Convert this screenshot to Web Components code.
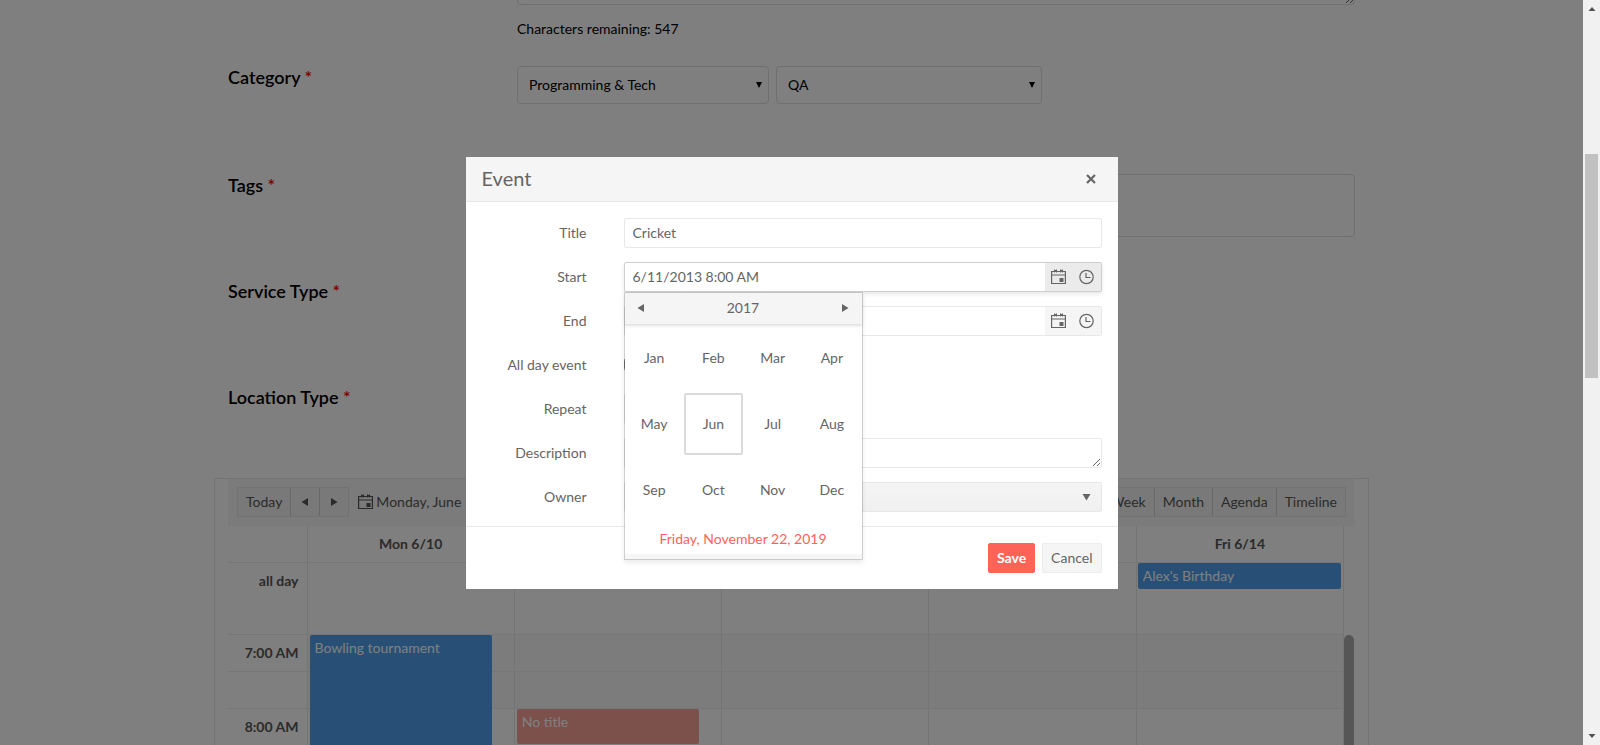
<!DOCTYPE html>
<html lang="en">
<head>
<meta charset="utf-8">
<title>Event</title>
<style>
html,body{height:100%}
body{margin:0;background:#fff;font:14px/20px Lato,"Open Sans",sans-serif;color:#000}
</style>
</head>
<body>
<app-shell>
  <form-row label="Description" class="first" nolabel>
    <text-counter remaining="547"></text-counter>
  </form-row>
  <form-row label="Category" style="--h:108px">
    <drop-list name="Category" value="Programming &amp; Tech" style="--w:252px"></drop-list>
    <drop-list name="Subcategory" value="QA" style="--w:266px"></drop-list>
  </form-row>
  <form-row label="Tags" style="--h:106px"><tag-box></tag-box></form-row>
  <form-row label="Service Type" style="--h:106px"></form-row>
  <form-row label="Location Type" style="--h:92px"></form-row>
  <week-scheduler></week-scheduler>
  <event-dialog slot="overlay"></event-dialog>
</app-shell>
<script>
const define = (name, html, setup) => customElements.define(name, class extends HTMLElement {
  static formAssociated = name === 'date-field';
  constructor() {
    super();
    const t = document.createElement('template');
    t.innerHTML = '<style>*{box-sizing:border-box}:host{box-sizing:border-box}button,input,select,textarea{font:inherit;color:inherit;margin:0}</style>' + html;
    this.attachShadow({mode: 'open', delegatesFocus: name === 'date-field'}).append(t.content.cloneNode(true));
  }
  connectedCallback() { if (setup) setup(this, this.shadowRoot); }
});

const shapes = {
  calendar: '<path d="M.6 2.500h13.800v12H.6zM.6 6h13.800" fill="none" stroke="currentColor" stroke-width="1.200"/><path d="M3.500 .5v3M5.500 .5v3M9.500 .5v3M11.500 .5v3" stroke="currentColor" stroke-width="1"/><path d="M3.500 1h2v2h-2zM9.500 1h2v2h-2zM8.500 9H12.500v4h-4z" fill="currentColor"/>',
  clock: '<circle cx="7.500" cy="8" r="6.700" fill="none" stroke="currentColor" stroke-width="1.200"/><path d="M7 4v4.500H11.500" fill="none" stroke="currentColor" stroke-width="1.200"/>',
  left: '<path d="M11 4v8L4.500 8z" fill="currentColor"/>',
  right: '<path d="M5 4v8L11.500 8z" fill="currentColor"/>',
  down: '<path d="M3.500 5h8l-4 6.500z" fill="currentColor"/>',
  select: '<path d="M5 5h6l-3 6z" fill="currentColor"/>',
  close: '<path d="M3 4l8 8M11 4l-8 8" stroke="currentColor" stroke-width="2.200"/>',
  up2: '<path d="M4.500 11L8 7l3.500 4z" fill="currentColor"/>',
  down2: '<path d="M4.500 5L8 9l3.500-4z" fill="currentColor"/>'
};
define('ui-icon', '<style>:host{display:inline-flex;width:16px;height:16px;flex:none}</style><svg width="16" height="16" viewBox="0 0 16 16" aria-hidden="true"></svg>',
  (el, r) => { r.querySelector('svg').innerHTML = shapes[el.getAttribute('shape')]; });

define('app-shell', `<style>
:host{display:flex;height:100vh;overflow:hidden}
.view{flex:1;min-width:0;position:relative;overflow:hidden}
main{max-width:1155px;margin:0 auto}
</style>
<div class="view"><main><slot></slot></main><slot name="overlay"></slot></div><scroll-rail></scroll-rail>`);

define('scroll-rail', `<style>
:host{display:flex;flex-direction:column;align-items:center;width:17px;background:#f1f1f1;color:#505050}
div{width:13px}.a{flex:138}.t{flex:223;background:#c1c1c1}.b{flex:351}
</style><ui-icon shape="up2"></ui-icon><div class="a"></div><div class="t"></div><div class="b"></div><ui-icon shape="down2"></ui-icon>`);

define('form-row', `<style>
:host{display:grid;grid-template-columns:289px 1fr;padding:0 14px;min-height:var(--h,auto)}
:host(.first){height:66px}
h3{margin:0;font-size:18px;line-height:22px;font-weight:600}
b{font-weight:600;color:#f00}
.f{display:flex;gap:7px;align-items:flex-start;min-width:0}
</style><h3></h3><div class="f"><slot></slot></div>`, (el, r) => {
  if (el.hasAttribute('nolabel')) return;
  r.querySelector('h3').innerHTML = el.getAttribute('label') + ' <b>*</b>';
});

define('text-counter', `<style>
:host{display:block;flex:1}
textarea{display:block;width:100%;height:80px;margin-top:-75px;border:1px solid #dedede;border-radius:4px;resize:vertical;background:none}
p{margin:14px 0 0;line-height:20px;font-size:14px}
</style><textarea aria-label="Description"></textarea><p></p>`, (el, r) => {
  r.querySelector('p').textContent = 'Characters remaining: ' + el.getAttribute('remaining');
});

define('drop-list', `<style>
:host{display:block;position:relative;width:var(--w)}
select{width:100%;height:38px;appearance:none;background:none;border:1px solid #dedede;border-radius:4px;padding:0 11px}
ui-icon{position:absolute;right:2px;top:11px;pointer-events:none}
</style><select><option></option></select><ui-icon shape="select"></ui-icon>`, (el, r) => {
  r.querySelector('select').setAttribute('aria-label', el.getAttribute('name'));
  r.querySelector('option').textContent = el.getAttribute('value');
});

define('tag-box', `<style>:host{display:block;flex:1}
input{display:block;width:100%;height:63px;border:1px solid #dedede;border-radius:4px;background:none}
</style><input type="text" aria-label="Tags">`);

define('week-scheduler', `<style>
:host{display:block;border:1px solid #e6e6e6;border-bottom:0;padding:0 14px 0 13px;color:#565656}
nav{display:flex;align-items:center;height:47px;padding:0 8px 2px 9px;background:#f6f6f6}
.g{display:flex;border:1px solid #e4e4e4}
.g button{height:28px;padding:0 8px;border:0;background:#f3f3f3;white-space:nowrap}
.g button+button{border-left:1px solid #d0d0d0}
.g button.i{padding:0 6px;display:flex;align-items:center}
.d{display:flex;align-items:center;gap:2px;margin-left:9px;white-space:nowrap;color:#565656;text-decoration:none}
.r{margin-left:auto}
.w{display:flex;align-items:stretch}
table{flex:1;table-layout:fixed;border-collapse:collapse;width:1px}
.k{width:10px;padding-top:109px}
.k i{display:block;height:100%;background:#adadad;border-radius:5px 5px 0 0}
th,td{padding:0;border-bottom:1px solid #ececec}
th+th,td{border-left:1px solid #e8e8e8}
td:last-child,thead th:last-child{border-right:1px solid #e8e8e8}
thead tr{height:36px}tr{height:37px}tr.a{height:72px}
col:first-child{width:79px}
tbody th{text-align:right;padding-right:8px}
.a th{vertical-align:top;padding-top:8px}
.n td{background:#f9f9f9}
td{position:relative;vertical-align:top}
.e{position:absolute;z-index:1;left:2px;top:0;border-radius:2px;background:#50a0ee;color:#fff;padding:3px 5px}
</style>
<nav><div class="g"><button>Today</button><button class="i" aria-label="Previous"><ui-icon shape="left"></ui-icon></button><button class="i" aria-label="Next"><ui-icon shape="right"></ui-icon></button></div>
<a class="d" href="#"><ui-icon shape="calendar"></ui-icon><span>Monday, June 10, 2013</span></a>
<div class="g r"><button>Week</button><button>Month</button><button>Agenda</button><button>Timeline</button></div></nav>
<div class="w"><table>
<colgroup><col><col><col><col><col><col></colgroup>
<thead><tr><th></th><th>Mon 6/10</th><th></th><th></th><th></th><th>Fri 6/14</th></tr></thead>
<tbody>
<tr class="a"><th>all day</th><td></td><td></td><td></td><td></td><td><div class="e" style="left:1px;right:2px;height:26px">Alex's Birthday</div></td></tr>
<tr class="n"><th>7:00 AM</th><td><div class="e" style="right:22px;height:220px">Bowling tournament</div></td><td></td><td></td><td></td><td></td></tr>
<tr class="n"><th></th><td></td><td></td><td></td><td></td><td></td></tr>
<tr><th>8:00 AM</th><td></td><td><div class="e" style="right:22px;height:35px;background:#f8a398">No title</div></td><td></td><td></td><td></td></tr>
<tr><th></th><td></td><td></td><td></td><td></td><td></td></tr>
</tbody></table><div class="k"><i></i></div></div>`);

define('date-field', `<style>
:host{display:flex;height:30px;border:1px solid #e8e8e8;border-radius:2px;background:#fff}
:host([active]){border-color:#cfcfcf;box-shadow:0 2px 4px rgba(0,0,0,.1)}
input{flex:1;min-width:0;border:0;padding:0 8px;outline:0;background:none}
span{display:flex;background:#f5f5f5}
:host([active]) span{background:#ebebeb}
button{width:28px;border:0;background:none;padding:0;display:flex;align-items:center;justify-content:center}
</style><input type="text"><span><button aria-label="Open the calendar"><ui-icon shape="calendar"></ui-icon></button><button aria-label="Open the time list"><ui-icon shape="clock"></ui-icon></button></span>`, (el, r) => {
  const i = r.querySelector('input');
  i.value = el.getAttribute('value') || '';
  i.setAttribute('aria-label', el.getAttribute('name'));
});

define('month-picker', `<style>
:host{display:block;width:239px;border:1px solid rgba(0,0,0,.15);background:#fff;background-clip:padding-box;box-shadow:0 3px 5px rgba(0,0,0,.08)}
header{display:flex;align-items:center;justify-content:space-between;height:32px;background:#f5f5f5;border-bottom:1px solid #e4e4e4;box-shadow:0 1px 3px rgba(0,0,0,.12)}
header button{border:0;background:none;padding:0;width:32px;height:32px;display:flex;align-items:center;justify-content:center}
.m{display:grid;grid-template-columns:repeat(4,1fr);grid-auto-rows:66px;align-items:center}
.m button{height:62px;padding:0;border:2px solid transparent;border-radius:2px;background:none}
.m .s{border-color:#dadada}
.t{display:block;height:31px;line-height:31px;text-align:center;color:#ff6358;text-decoration:none}
footer{height:5px;background:#f6f6f6}
</style><header><button aria-label="Previous year"><ui-icon shape="left"></ui-icon></button><span>2017</span><button aria-label="Next year"><ui-icon shape="right"></ui-icon></button></header>
<div class="m"></div><a class="t" href="#">Friday, November 22, 2019</a><footer></footer>`, (el, r) => {
  r.querySelector('.m').innerHTML = 'Jan Feb Mar Apr May Jun Jul Aug Sep Oct Nov Dec'.split(' ')
    .map(m => `<button${m === 'Jun' ? ' class="s"' : ''}>${m}</button>`).join('');
});

define('event-dialog', `<style>
:host{display:flex;align-items:center;justify-content:center;position:absolute;inset:0;z-index:5;background:rgba(0,0,0,.5);color:#656565}
section{width:652px;background:#fff}
header{display:flex;align-items:center;justify-content:space-between;height:45px;padding:0 16px;background:#f5f5f5;border-bottom:1px solid #e8e8e8}
h2{margin:0;font-size:20px;line-height:24px;padding-bottom:2px;font-weight:400}
header button{border:0;background:none;padding:0;width:20px;height:20px;display:flex;align-items:center;justify-content:center}
form{display:grid;grid-template-columns:105px 1fr;column-gap:37px;row-gap:14px;padding:16px 16px 14px;align-items:center;grid-auto-rows:30px}
label{text-align:right}
.x{display:block;width:100%;height:30px;border:1px solid #e8e8e8;border-radius:2px;padding:0 8px;background:#fff}
textarea.x{resize:vertical}
.p{position:relative}
.p month-picker{position:absolute;left:0;top:30px;z-index:2}
.c{display:block;width:13px;height:13px}
.q{width:180px}
select.x{appearance:none;background:linear-gradient(#f5f5f5,#f0f0f0)}
.p>ui-icon{position:absolute;right:7px;top:7px;pointer-events:none}
footer{display:flex;justify-content:flex-end;gap:7px;padding:16px;border-top:1px solid #e8e8e8}
footer button{height:30px;padding:0 8px;border:1px solid #ececec;border-radius:2px;background:#f5f5f5}
footer .s{background:#ff6358;border-color:#ff6358;color:#fff;font-weight:700}
</style>
<section role="dialog" aria-labelledby="h">
<header><h2 id="h">Event</h2><button aria-label="Close"><ui-icon shape="close"></ui-icon></button></header>
<form>
<label for="title">Title</label><input id="title" class="x" type="text" value="Cricket">
<label for="start">Start</label><div class="p"><date-field id="start" name="Start" value="6/11/2013 8:00 AM" active></date-field><month-picker></month-picker></div>
<label for="end">End</label><date-field id="end" name="End"></date-field>
<label for="all">All day event</label><input id="all" class="c" type="checkbox">
<label for="rep">Repeat</label><select id="rep" class="x q"></select>
<label for="desc">Description</label><textarea id="desc" class="x"></textarea>
<label for="own">Owner</label><div class="p"><select id="own" class="x"></select><ui-icon shape="down"></ui-icon></div>
</form>
<footer><button class="s">Save</button><button>Cancel</button></footer>
</section>`);
</script>
</body>
</html>
